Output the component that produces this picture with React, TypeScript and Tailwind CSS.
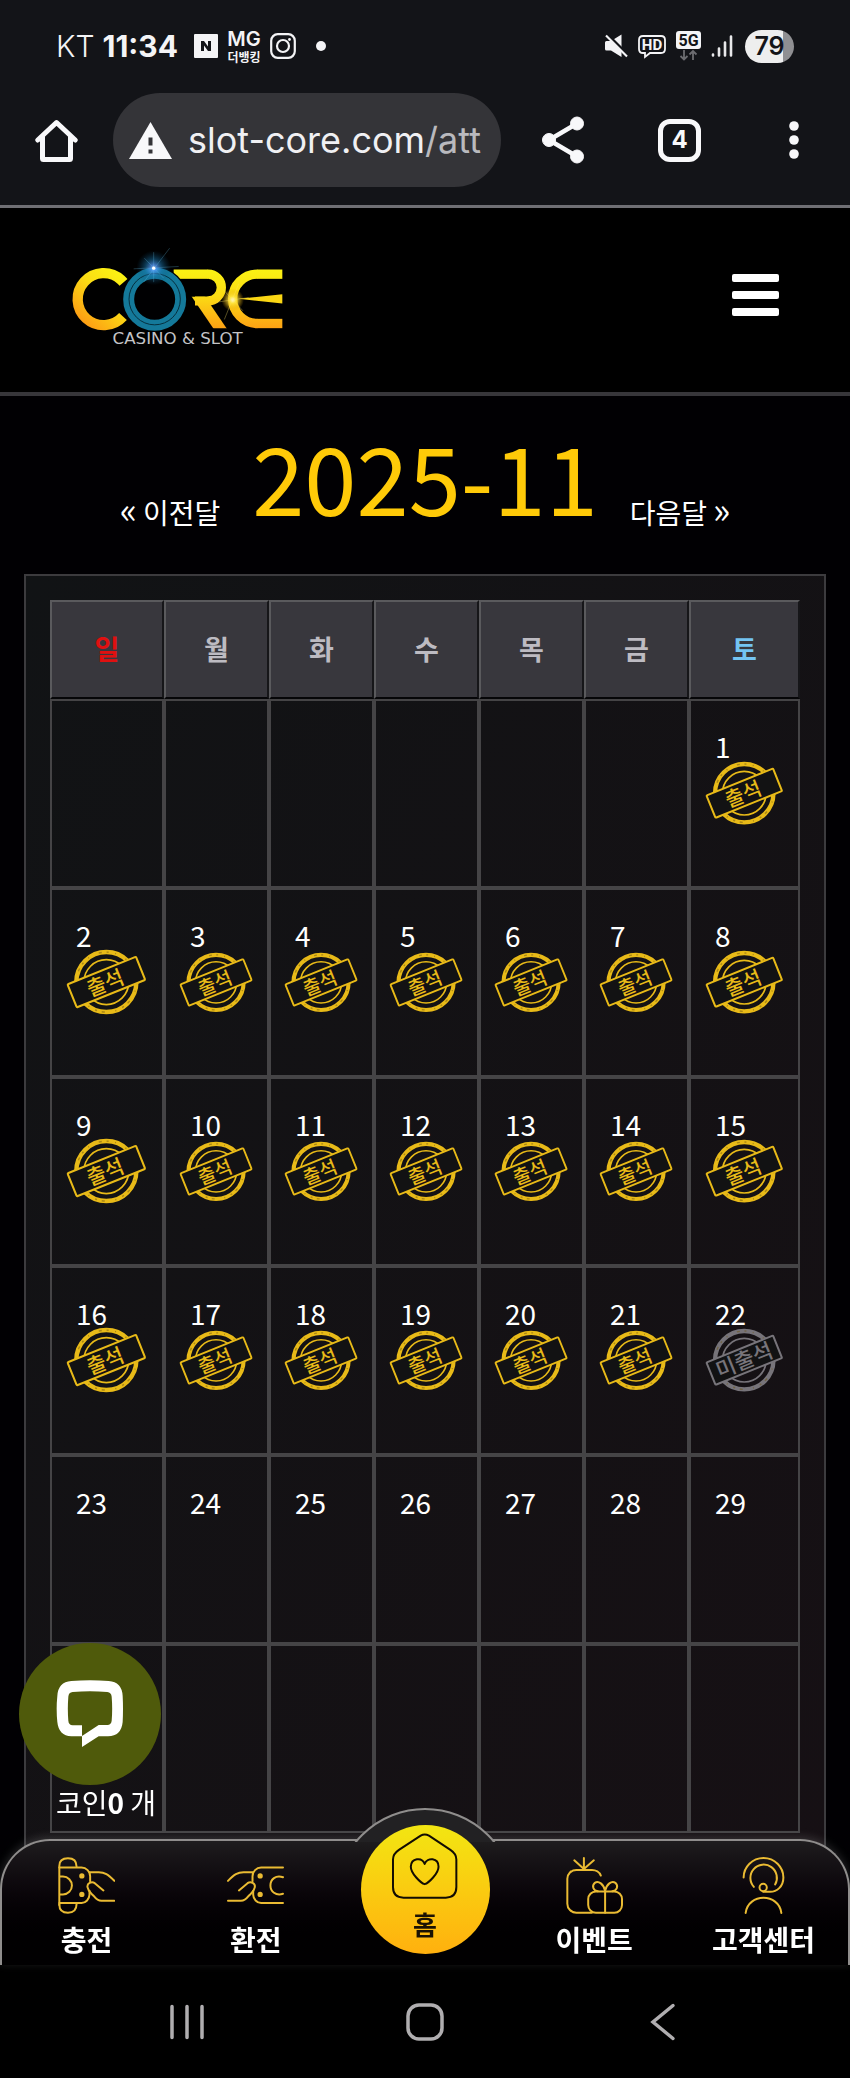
import type { ReactNode } from "react";

type DayState = "attended" | "missed" | "none";

const WEEKDAYS = [
  { label: "일", width: "w-[15.2%]", color: "text-[#e01010]" },
  { label: "월", width: "w-[14%]", color: "text-[#bdbbc2]" },
  { label: "화", width: "w-[14%]", color: "text-[#bdbbc2]" },
  { label: "수", width: "w-[14%]", color: "text-[#bdbbc2]" },
  { label: "목", width: "w-[14%]", color: "text-[#bdbbc2]" },
  { label: "금", width: "w-[14%]", color: "text-[#bdbbc2]" },
  { label: "토", width: "w-[14.8%]", color: "text-[#74c4f2]" },
];

const FIRST_WEEKDAY = 6;
const DAYS_SHOWN = 29;
const TODAY = 22;

const weeks: (number | null)[][] = Array.from({ length: 6 }, (_, w) =>
  Array.from({ length: 7 }, (_, d) => {
    const day = w * 7 + d - FIRST_WEEKDAY + 1;
    return day >= 1 && day <= DAYS_SHOWN ? day : null;
  })
);

function stateOf(day: number): DayState {
  if (day < TODAY) return "attended";
  return day === TODAY ? "missed" : "none";
}

function Stamp({ missed }: { missed: boolean }) {
  const color = missed ? "#77747a" : "#e8ba18";
  return (
    <svg viewBox="0 0 236 192" className="w-[74%]" fill="none" stroke={color}>
      <circle cx="117" cy="96" r="87" strokeWidth="13" />
      <circle cx="117" cy="96" r="87" strokeWidth="4" stroke="#6b5410" strokeOpacity="0.5" strokeDasharray="6 19 3 31 9 14" />
      <circle cx="117" cy="96" r="65" strokeWidth="5" />
      <g transform="rotate(-22 117 96)">
        <rect x="10" y="60" width="214" height="72" rx="3" fill="#121213" strokeWidth="6" />
        <text
          x={missed ? 117 : 113}
          y="119"
          textAnchor="middle"
          fontSize={missed ? 64 : 60}
          fontWeight="500"
          fill={color}
          stroke="none"
        >
          {missed ? "미출석" : "출석"}
        </text>
      </g>
    </svg>
  );
}

function Logo() {
  return (
    <svg viewBox="200 120 660 320" className="h-[107px] w-[220px]" role="img" aria-label="CORE Casino &amp; Slot">
      <defs>
        <linearGradient id="gold" gradientUnits="userSpaceOnUse" x1="0" y1="197" x2="0" y2="384">
          <stop offset="0" stopColor="#fbf313" />
          <stop offset="0.45" stopColor="#fbdc14" />
          <stop offset="1" stopColor="#fd9e14" />
        </linearGradient>
        <radialGradient id="blueGlow">
          <stop offset="0" stopColor="#dff4ff" />
          <stop offset="0.15" stopColor="#5a9dff" />
          <stop offset="0.5" stopColor="#1a78b0" stopOpacity="0.6" />
          <stop offset="1" stopColor="#0a4a70" stopOpacity="0" />
        </radialGradient>
        <radialGradient id="goldGlow">
          <stop offset="0" stopColor="#fffbe0" />
          <stop offset="0.3" stopColor="#ffe640" stopOpacity="0.9" />
          <stop offset="1" stopColor="#e0a000" stopOpacity="0" />
        </radialGradient>
        <clipPath id="bowl">
          <rect x="622" y="190" width="80" height="140" />
        </clipPath>
        <clipPath id="leg">
          <rect x="560" y="284" width="130" height="94" />
        </clipPath>
        <clipPath id="halfRing">
          <rect x="670" y="190" width="101" height="200" />
        </clipPath>
      </defs>
      <g fill="none" stroke="url(#gold)">
        <circle cx="310" cy="291" r="78" strokeWidth="31" strokeDasharray="376 115" transform="rotate(42 310 291)" />
        <circle cx="623" cy="256" r="40" strokeWidth="28" clipPath="url(#bowl)" />
        <rect x="520" y="202" width="103" height="28" fill="url(#gold)" stroke="none" />
        <rect x="584" y="283" width="39" height="27" fill="url(#gold)" stroke="none" />
        <line x1="585" y1="270" x2="668" y2="392" strokeWidth="33" clipPath="url(#leg)" />
        <circle cx="771" cy="290" r="74" strokeWidth="28" clipPath="url(#halfRing)" />
        <rect x="770" y="202" width="76" height="28" fill="url(#gold)" stroke="none" />
        <rect x="770" y="350" width="76" height="28" fill="url(#gold)" stroke="none" />
      </g>
      <polygon points="715,290 846,276 846,304" fill="#fbd714" />
      <circle cx="463" cy="291" r="98" fill="#000002" />
      <circle cx="463" cy="291" r="78" fill="none" stroke="#14799a" strokeWidth="33" />
      <circle cx="463" cy="291" r="77" fill="none" stroke="#06303f" strokeWidth="3" />
      <circle cx="460" cy="197" r="52" fill="url(#blueGlow)" opacity="0.8" />
      <g stroke="#6cc8f0" strokeWidth="2" opacity="0.4">
        <line x1="400" y1="200" x2="535" y2="193" />
        <line x1="460" y1="150" x2="460" y2="240" />
        <line x1="430" y1="240" x2="508" y2="138" />
        <line x1="432" y1="168" x2="490" y2="228" />
      </g>
      <circle cx="460" cy="198" r="5" fill="#ffffff" />
      <circle cx="697" cy="293" r="34" fill="url(#goldGlow)" />
      <g stroke="#ffe96a" strokeWidth="2" opacity="0.5">
        <line x1="650" y1="300" x2="745" y2="286" />
        <line x1="715" y1="245" x2="672" y2="352" />
        <line x1="668" y1="262" x2="728" y2="326" />
      </g>
      <text x="532" y="425" textAnchor="middle" fontSize="50" fill="#c4c4c7" className="font-['DejaVu_Sans']">
        CASINO &amp; SLOT
      </text>
    </svg>
  );
}

function StatusBar() {
  return (
    <div className="flex h-[92px] items-center justify-between px-14 text-[#f4f4f6]">
      <div className="flex items-center gap-4">
        <p className="flex items-baseline gap-2 font-['Inter'] text-[30px] leading-none">
          <span className="font-light">KT</span>
          <span className="font-bold">11:34</span>
        </p>
        <div className="flex items-center gap-2">
          <svg viewBox="0 0 24 24" className="size-6">
            <rect width="24" height="24" rx="1" fill="#f4f4f6" />
            <path d="M7 17V7h3l4 5.5V7h3v10h-3l-4-5.5V17z" fill="#131418" />
          </svg>
          <div className="flex w-9 flex-col items-center pt-0.5">
            <span className="font-['Inter'] text-[20px] leading-4 font-semibold">MG</span>
            <span className="mt-1 text-[12px] leading-3 font-bold whitespace-nowrap">더뱅킹</span>
          </div>
          <svg viewBox="0 0 26 26" className="size-[26px]" fill="none" stroke="#f4f4f6" strokeWidth="2.2">
            <rect x="1.2" y="1.2" width="23.6" height="23.6" rx="6.5" />
            <circle cx="13" cy="13" r="6" />
            <circle cx="19.5" cy="6.5" r="1.4" fill="#f4f4f6" stroke="none" />
          </svg>
        </div>
        <span className="ml-1 size-2.5 rounded-full bg-[#f4f4f6]" />
      </div>
      <div className="flex items-center gap-2.5">
        <svg viewBox="0 0 24 24" className="size-6" fill="#f4f4f6">
          <path d="M2.5 7H7L17.5 0.5V23L7 16.5H2.5Q1 16.5 1 15V8.5Q1 7 2.5 7Z" />
          <path d="M3 0.500 24 21.500" stroke="#131418" strokeWidth="3.500" />
          <path d="M2 1.5 23 22.5" stroke="#f4f4f6" strokeWidth="2.2" />
        </svg>
        <svg viewBox="0 0 28 25" className="h-[25px] w-7" fill="none" stroke="#f4f4f6" strokeWidth="1.8">
          <path d="M5 2h18q4 0 4 4v9q0 4-4 4H12l-5 4v-4H5q-4 0-4-4V6q0-4 4-4z" />
          <text x="14" y="16" textAnchor="middle" fontSize="15" fontWeight="700" fill="#f4f4f6" stroke="none" className="font-['Roboto']">
            HD
          </text>
        </svg>
        <svg viewBox="0 0 25 30" className="h-[30px] w-[25px]">
          <rect width="25" height="18" rx="3" fill="#f4f4f6" />
          <text x="12.5" y="14.5" textAnchor="middle" fontSize="16" fontWeight="700" fill="#131418" className="font-['Roboto']">
            5G
          </text>
          <path d="M8 19v9M4.5 25 8 28.5l3.5-3.5M17 29v-9M13.5 23.5 17 20l3.5 3.5" fill="none" stroke="#6c6c70" strokeWidth="1.8" />
        </svg>
        <svg viewBox="0 0 22 24" className="h-6 w-[22px]" stroke="#e8e8ea" strokeWidth="2.6" strokeLinecap="round">
          <path d="M2 20.5v1M8 14.5v7M14 8.5v13M20 2.5v19" />
        </svg>
        <div className="ml-0.5 flex h-[33px] w-[49px] items-center justify-center rounded-full bg-linear-to-r from-[#eeeeee] from-78% to-[#8f8f92] to-78% font-['Inter'] text-[25px] leading-none font-semibold text-[#131418]">
          79
        </div>
      </div>
    </div>
  );
}

function BrowserBar() {
  return (
    <div className="flex items-center pt-px pr-[37px] pb-[18px] pl-[35px]">
      <button type="button" aria-label="홈페이지">
        <svg viewBox="0 0 43 43" className="size-[43px]" fill="none" stroke="#f8f8fa" strokeWidth="5" strokeLinejoin="round" strokeLinecap="round">
          <path d="M2.8 21 21.5 3.5 40.2 21" />
          <path d="M7.5 18v21.5q0 1 1 1h26q1 0 1-1V18" />
        </svg>
      </button>
      <div className="mr-[41px] ml-[35px] flex h-[94px] min-w-0 flex-1 items-center gap-4 rounded-full bg-[#343438] px-4">
        <svg viewBox="0 0 43 37" className="h-[37px] w-[43px] shrink-0">
          <path d="M21.5 0 43 37H0z" fill="#f8f8fa" />
          <path d="M19.5 15.5h4v8h-4zM19.5 27.5h4v4h-4z" fill="#343438" />
        </svg>
        <p className="overflow-hidden font-['Inter'] text-[36px] leading-[48px] whitespace-nowrap text-[#f0f0f3]">
          slot-core.com<span className="text-[#b9b9be]">/att</span>
        </p>
      </div>
      <div className="flex items-center gap-[74px]">
        <button type="button" aria-label="공유">
          <svg viewBox="0 0 42 48" className="h-12 w-[42px]" fill="#f8f8fa" stroke="#f8f8fa">
            <path d="M35 7.5 7 24l28 16.5" fill="none" strokeWidth="4.5" />
            <circle cx="7" cy="24" r="6.5" />
            <circle cx="35" cy="7.5" r="6.5" />
            <circle cx="35" cy="40.5" r="6.5" />
          </svg>
        </button>
        <button
          type="button"
          aria-label="탭 4개"
          className="flex size-[43px] items-center justify-center rounded-[12px] border-[5px] border-[#f8f8fa] font-['Inter'] text-[24px] leading-none font-bold text-[#f8f8fa]"
        >
          4
        </button>
        <button type="button" aria-label="더보기">
          <svg viewBox="0 0 38 42" className="h-[42px] w-[38px]" fill="#f8f8fa">
            <circle cx="19" cy="7" r="4.8" />
            <circle cx="19" cy="21" r="4.8" />
            <circle cx="19" cy="35" r="4.8" />
          </svg>
        </button>
      </div>
    </div>
  );
}

function Hand() {
  return (
    <>
      <path d="M264 816H292C310 816 320 823 339 842" />
      <path d="M306 871 280 849C270 842 256 850 258 861C260 876 272 881 278 889C284 897 290 902 300 902H339" />
    </>
  );
}

const DepositIcon = (
  <svg viewBox="169 770 172 172" className="size-[57px]" fill="none" stroke="#eabb33" strokeWidth="6" strokeLinecap="round">
    <path d="M173 915V797C173 782 183 774 199 774C215 774 225 782 225 799" />
    <path d="M173 913C173 930 183 938 199 938C215 938 225 930 225 912" />
    <path d="M173 802H240A26 26 0 0 1 266 828V843M264 872V884A26 26 0 0 1 240 909H173" />
    <path d="M175 829H184A27 27 0 0 1 184 883H175" />
    <circle cx="241" cy="827" r="5" fill="#eabb33" />
    <circle cx="241" cy="883" r="5" fill="#eabb33" />
    <Hand />
  </svg>
);

const WithdrawIcon = (
  <svg viewBox="679 770 172 172" className="size-[57px]" fill="none" stroke="#eabb33" strokeWidth="6" strokeLinecap="round">
    <path d="M848 802H782A26 26 0 0 0 756 828V843M758 872V884A26 26 0 0 0 782 909H848" />
    <path d="M848 831C826 823 810 838 810 856C810 874 826 888 848 881" />
    <circle cx="779" cy="827" r="5" fill="#eabb33" />
    <circle cx="779" cy="883" r="5" fill="#eabb33" />
    <g transform="translate(1021 0) scale(-1 1)">
      <Hand />
    </g>
  </svg>
);

const EventIcon = (
  <svg viewBox="424 770 172 172" className="size-[57px]" fill="none" stroke="#eabb33" strokeWidth="6" strokeLinecap="round">
    <path d="M478 806V773M478 806 449 780M478 806 508 780" />
    <path d="M502 938H455A27 27 0 0 1 428 911V836A27 27 0 0 1 455 809H501A28 24 0 0 1 529 826" />
    <rect x="491" y="874" width="102" height="64" rx="23" />
    <path d="M542 874V938" />
    <path d="M542 872C538 852 522 840 511 848C501 857 506 872 520 873" />
    <path d="M542 872C546 852 562 840 573 848C583 857 578 872 564 873" />
  </svg>
);

const SupportIcon = (
  <svg viewBox="934 770 172 172" className="size-[57px]" fill="none" stroke="#eabb33" strokeWidth="6" strokeLinecap="round">
    <path d="M960 832A60 59 0 0 1 1080 832C1080 860 1060 875 1040 875H1019" />
    <circle cx="1019" cy="862" r="11" />
    <path d="M991 860A40 40 0 1 1 1055 853" />
    <path d="M966 939C974 878 1066 878 1074 939" />
  </svg>
);

function NavItem({ label, icon }: { label: string; icon: ReactNode }) {
  return (
    <a href="#" className="flex flex-1 flex-col items-center pt-4 text-[28px] leading-[40px] font-bold whitespace-nowrap text-white">
      {icon}
      <span className="mt-[5px]">{label}</span>
    </a>
  );
}

function BottomNav() {
  return (
    <nav className="relative flex h-[126px] rounded-t-[50px] border-x-2 border-t-2 border-[#8f8d8c] bg-linear-to-b from-[#1e1c1e] to-[#010001] to-75% shadow-[0_-2px_10px_rgba(190,190,190,0.2)]">
      <div className="absolute inset-x-0 -top-[33px] mx-auto h-[34px] w-[180px] overflow-hidden">
        <div className="size-[180px] rounded-full border-2 border-[#8f8d8c] bg-[#222123]" />
      </div>
      <NavItem label="충전" icon={DepositIcon} />
      <NavItem label="환전" icon={WithdrawIcon} />
      <div className="flex flex-1 justify-center">
        <a
          href="#"
          className="relative -mt-4 flex size-[129px] flex-col items-center rounded-full bg-linear-to-b from-[#f2e612] to-[#ffb00e] pt-2 text-[26px] leading-[40px] font-bold text-[#1b1204]"
        >
          <svg viewBox="126 98 200 200" className="size-[66px]" fill="none" stroke="#120c02" strokeWidth="6" strokeLinejoin="round">
            <path d="M213 106Q225 99 238 106L303 149Q321 161 321 178V262Q321 294 289 294H161Q129 294 129 262V178Q129 161 147 149Z" />
            <path d="M225 253C213 250 183 220 183 200C184 173 217 170 225 192C233 170 267 173 267 200C267 220 237 250 225 253Z" />
          </svg>
          <span className="mt-[5px]">홈</span>
        </a>
      </div>
      <NavItem label="이벤트" icon={EventIcon} />
      <NavItem label="고객센터" icon={SupportIcon} />
    </nav>
  );
}

function SystemBar() {
  return (
    <div className="flex h-[113px] items-center justify-between bg-black px-[168px] text-[#b0aeb0]">
      <button type="button" aria-label="최근 앱">
        <svg viewBox="0 0 38 38" className="size-[38px]" stroke="currentColor" strokeWidth="3.5" strokeLinecap="round">
          <path d="M4 3.5v31M19 3.5v31M34 3.5v31" />
        </svg>
      </button>
      <button type="button" aria-label="홈 화면">
        <svg viewBox="0 0 38 38" className="size-[38px]" fill="none" stroke="currentColor" strokeWidth="3.5">
          <rect x="2" y="2" width="34" height="34" rx="11" />
        </svg>
      </button>
      <button type="button" aria-label="뒤로">
        <svg viewBox="0 0 38 38" className="size-[38px]" fill="none" stroke="currentColor" strokeWidth="3.5" strokeLinecap="round">
          <path d="M29 2.5 9 19l20 16.5" />
        </svg>
      </button>
    </div>
  );
}

export default function App() {
  return (
    <div className="min-h-screen bg-[#010003] pb-[219px] font-['Noto_Sans_CJK_KR',sans-serif] text-white">
      <header className="border-b-3 border-[#6f6f74] bg-[#131418]">
        <StatusBar />
        <BrowserBar />
      </header>

      <div className="flex h-[188px] items-center justify-between border-b-4 border-[#37363a] bg-black pr-[71px] pb-[10px] pl-[67px]">
        <a href="#">
          <Logo />
        </a>
        <button type="button" aria-label="메뉴" className="flex w-[47px] flex-col gap-[9px]">
          <span className="h-2 rounded-xs bg-white" />
          <span className="h-2 rounded-xs bg-white" />
          <span className="h-2 rounded-xs bg-white" />
        </button>
      </div>

      <main className="px-6">
        <div className="flex h-[178px] items-center justify-center pb-5">
          <div className="flex items-end gap-8">
            <a href="#" className="flex items-baseline gap-1.5 text-[28px] leading-[46px]">
              <span className="text-[36px] leading-none">«</span>이전달
            </a>
            <h1 className="text-[94px] leading-[120px] text-[#ffca08]">2025-11</h1>
            <a href="#" className="flex items-baseline gap-1.5 text-[28px] leading-[46px]">
              다음달<span className="text-[36px] leading-none">»</span>
            </a>
          </div>
        </div>

        <section className="border-2 border-[#3c3b3e] bg-linear-to-br from-[#111315] to-[#161014] p-6">
          <table className="w-full table-fixed border-separate border-spacing-0">
            <thead>
              <tr className="h-[99px]">
                {WEEKDAYS.map((d) => (
                  <th
                    key={d.label}
                    scope="col"
                    className={`${d.width} ${d.color} border-2 border-t-[#5a5a5d] border-r-[#161619] border-b-[#060608] border-l-[#5a5a5d] bg-[#38373d] text-[27px] font-bold`}
                  >
                    {d.label}
                  </th>
                ))}
              </tr>
            </thead>
            <tbody>
              {weeks.map((week, w) => (
                <tr key={w} className="h-[189px]">
                  {week.map((day, d) => {
                    const state = day === null ? "none" : stateOf(day);
                    return (
                      <td key={d} className="border-2 border-[#454446] p-0">
                        <div className="grid h-[185px]">
                          {state !== "none" && (
                            <div className="col-start-1 row-start-1 flex items-center justify-center">
                              <Stamp missed={state === "missed"} />
                            </div>
                          )}
                          {day !== null && (
                            <span className="col-start-1 row-start-1 pt-[25px] pl-6 text-[28px] leading-[40px]">{day}</span>
                          )}
                        </div>
                      </td>
                    );
                  })}
                </tr>
              ))}
            </tbody>
          </table>
        </section>
      </main>

      <footer className="fixed inset-x-0 bottom-0">
        <div className="absolute bottom-full left-[19px] mb-5 flex w-[142px] flex-col items-center">
          <button type="button" aria-label="채팅 상담" className="flex size-[142px] items-center justify-center rounded-full bg-[#4f5a0b]">
            <svg viewBox="168 248 204 204" className="size-[68px]" fill="#ffffff" fillRule="evenodd">
              <path d="M214 251Q270 246 326 251Q366 254 368 296Q370 335 368 374Q364 416 324 417H296L246 449V417H214Q176 415 172 374Q168 335 172 296Q174 254 214 251ZM218 284Q206 285 205 298Q202 335 205 370Q206 383 218 384H246V416L296 383H322Q334 382 335 370Q338 335 335 298Q334 286 322 284Q270 280 218 284Z" />
            </svg>
          </button>
          <p className="pl-8 text-[28px] leading-[34px] whitespace-nowrap">
            코인<b>0</b> 개
          </p>
        </div>
        <BottomNav />
        <SystemBar />
      </footer>
    </div>
  );
}
